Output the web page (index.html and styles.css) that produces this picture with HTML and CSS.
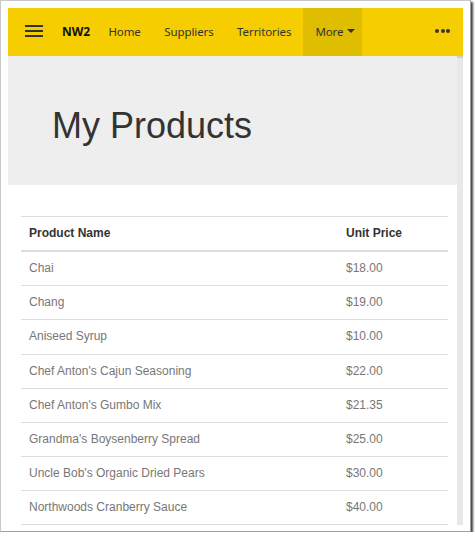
FILE: index.html
```html
<!DOCTYPE html>
<html lang="en">
<head>
    <meta charset="UTF-8">
    <meta name="viewport" content="width=device-width, initial-scale=1.0">
    <title>My Products</title>
    <link rel="stylesheet" href="styles.css">
</head>
<body>
    <div class="frame">
        <div class="screen">
            <div class="navbar">
                <div class="menu">
                    <span></span><span></span><span></span>
                </div>
                <a class="brand">NW2</a>
                <a class="link">Home</a>
                <a class="link">Suppliers</a>
                <a class="link">Territories</a>
                <a class="link active">More <span class="caret"></span></a>
                <div class="dots">
                    <span></span><span></span><span></span>
                </div>
            </div>
            <div class="main">
                <div class="content">
                    <div class="jumbo">
                        <h1 class="title">My Products</h1>
                    </div>
                    <div class="grid">
                        <table class="table">
                            <thead>
                                <tr><th class="name">Product Name</th><th>Unit Price</th></tr>
                            </thead>
                            <tbody>
                                <tr><td>Chai</td><td>$18.00</td></tr>
                                <tr><td>Chang</td><td>$19.00</td></tr>
                                <tr><td>Aniseed Syrup</td><td>$10.00</td></tr>
                                <tr><td>Chef Anton's Cajun Seasoning</td><td>$22.00</td></tr>
                                <tr><td>Chef Anton's Gumbo Mix</td><td>$21.35</td></tr>
                                <tr><td>Grandma's Boysenberry Spread</td><td>$25.00</td></tr>
                                <tr><td>Uncle Bob's Organic Dried Pears</td><td>$30.00</td></tr>
                                <tr class="last"><td>Northwoods Cranberry Sauce</td><td>$40.00</td></tr>
                            </tbody>
                        </table>
                    </div>
                </div>
                <div class="scrollbar"></div>
            </div>
        </div>
    </div>
</body>
</html>
```

FILE: styles.css
```css
* {
    margin: 0;
    padding: 0;
    box-sizing: border-box;
}
body {
    background: #ffffff;
    font-family: "Liberation Sans", Arial, sans-serif;
}
.frame {
    width: 471px;
    height: 532px;
    padding: 7px 8px 7px 7px;
    background: #ffffff;
    border: 1px solid #c8c8c8;
    border-right-color: #a0a0a0;
    border-bottom-color: #a0a0a0;
    box-shadow: 2px 2px 2px rgba(0, 0, 0, 0.75);
}
.screen {
    width: 455px;
    height: 517px;
    overflow: hidden;
    display: flex;
    flex-direction: column;
}
.navbar {
    height: 48px;
    flex-shrink: 0;
    background: #f5cd00;
    display: flex;
    align-items: stretch;
    font-family: "Segoe UI", "Noto Sans", sans-serif;
    font-size: 11.5px;
    letter-spacing: -0.1px;
    color: #333;
    padding-bottom: 2px;
}
.menu {
    width: 54px;
    padding-left: 17px;
    display: flex;
    flex-direction: column;
    justify-content: center;
    gap: 3px;
}
.menu span {
    display: block;
    width: 18px;
    height: 2px;
    background: #333;
}
.brand, .link {
    display: flex;
    align-items: center;
}
.brand {
    font-weight: bold;
    color: #111;
    font-size: 12px;
    padding-right: 7px;
}
.link {
    padding: 0 12px 0 11.5px;
}
.link.active {
    background: #dfbd00;
    margin-bottom: -2px;
    padding: 0 7px 2px 12px;
}
.caret {
    display: inline-block;
    margin-left: 4px;
    border-left: 4px solid transparent;
    border-right: 4px solid transparent;
    border-top: 4px solid #333;
}
.dots {
    margin-left: auto;
    padding-right: 13px;
    display: flex;
    align-items: center;
    gap: 1.5px;
}
.dots span {
    width: 4px;
    height: 4px;
    border-radius: 50%;
    background: #333;
}
.main {
    flex: 1;
    display: flex;
    min-height: 0;
}
.content {
    flex: 1;
    overflow: hidden;
}
.scrollbar {
    width: 6px;
    background: #e8e8e8;
    border-top: 2px solid #d0d0d0;
}
.jumbo {
    height: 129px;
    background: #eeeeee;
    padding-left: 44px;
    display: flex;
    align-items: center;
}
.title {
    font-weight: normal;
    font-size: 36px;
    color: #333;
    margin-top: 10px;
}
.grid {
    padding: 31px 9px 0 13px;
}
.table {
    width: 100%;
    border-collapse: collapse;
    font-size: 12px;
    line-height: 17.14px;
}
.table th, .table td {
    text-align: left;
    padding: 8px;
    border-top: 1px solid #dddddd;
}
.table th {
    color: #333;
    font-weight: bold;
    border-bottom: 2px solid #dddddd;
}
.table th.name {
    width: 317px;
}
.table td {
    color: #777;
}
.table tr.last td {
    border-bottom: 1px solid #dddddd;
}
```
